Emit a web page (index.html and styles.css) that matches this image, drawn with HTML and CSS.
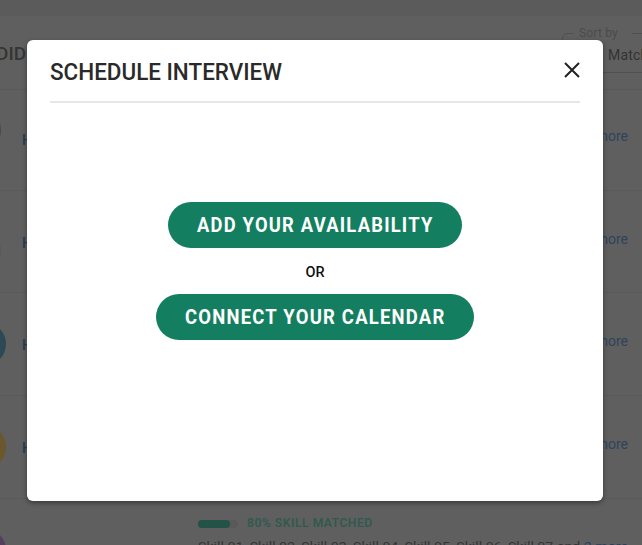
FILE: index.html
```html
<!DOCTYPE html>
<html lang="en">
<head>
<meta charset="utf-8">
<title>Schedule interview</title>
<link rel="stylesheet" href="styles.css">
</head>
<body>
<div class="page">
  <div class="topbar"></div>
  <header class="toolbar">
    <h2 class="section-title">DID</h2>
    <fieldset class="sort"><legend>Sort by</legend>Match</fieldset>
  </header>
  <main class="list">
    <div class="row"><span class="avatar grey"></span><span class="name">Headline</span><a class="more">2 more</a></div>
    <div class="row"><span class="avatar faint"></span><span class="name">Headline</span><a class="more">2 more</a></div>
    <div class="row"><span class="avatar blue"></span><span class="name">Headline</span><a class="more">2 more</a></div>
    <div class="row"><span class="avatar yellow"></span><span class="name">Headline</span><a class="more">2 more</a></div>
    <div class="row last"><span class="avatar purple"></span><span class="name">Headline</span>
      <div class="skills">
        <div class="match"><span class="meter"><span class="meter-fill"></span></span><span class="match-label">80% SKILL MATCHED</span></div>
        <div class="skill-list"><svg class="fit" width="432" height="20"><text x="0" y="15.5" textLength="430" lengthAdjust="spacingAndGlyphs">Skill 01, Skill 02, Skill 03, Skill 04, Skill 05, Skill 06, Skill 07 and <tspan class="link">2 more</tspan></text></svg></div>
      </div>
    </div>
  </main>
</div>
<div class="overlay">
  <section class="dialog" role="dialog">
    <header class="dialog-head">
      <svg class="title" width="240" height="30"><text x="0" y="22" textLength="232" lengthAdjust="spacingAndGlyphs">SCHEDULE INTERVIEW</text></svg>
      <svg class="close" width="16" height="16" viewBox="0 0 16 16"><path d="M1 1 15 15M15 1 1 15"/></svg>
    </header>
    <div class="actions">
      <button class="btn add"><svg width="237" height="24"><text x="0" y="19" textLength="236.5" lengthAdjust="spacingAndGlyphs">ADD YOUR AVAILABILITY</text></svg></button>
      <span class="or">OR</span>
      <button class="btn connect"><svg width="260" height="24"><text x="0" y="19" textLength="260.5" lengthAdjust="spacingAndGlyphs">CONNECT YOUR CALENDAR</text></svg></button>
    </div>
  </section>
</div>
</body>
</html>
```
FILE: styles.css
```css
* { box-sizing: border-box; }
body { margin: 0; width: 642px; height: 545px; overflow: hidden; background: #5f5f5f; font-family: Roboto, sans-serif; }
.page { height: 545px; overflow: hidden; }
.topbar { height: 16px; background: #5b5b5b; }
.toolbar { height: 74px; display: flex; justify-content: space-between; border-bottom: 1px solid #595959; }
.section-title { margin: 27px 0 0 -4px; font-size: 19px; line-height: 22px; font-weight: 500; letter-spacing: 0; color: #353535; }
.sort { width: 96px; height: 48px; margin: 9px -16px 0 0; padding: 5px 0 0 45px; border: 1px solid #505050; border-radius: 6px; font-size: 14px; line-height: 19px; letter-spacing: .2px; color: #333; }
.sort legend { margin-left: -34px; padding: 0 14px 0 5px; font-size: 12px; line-height: 16px; color: #4b4b4b; }
.list { display: flex; flex-direction: column; margin: -2px 0 0 -38px; }
.row { display: grid; flex: none; grid-template-columns: 60px 1fr auto; height: 102.7px; padding: 0 14px 0 0; border-bottom: 1px solid #5a5a5a; align-items: start; }
.avatar { width: 44px; height: 44px; margin-top: 29px; border-radius: 50%; }
.grey { width: 39px; margin-top: 20px; background: #494949; }
.faint { width: 39px; margin-top: 38px; background: #595959; }
.blue { background: #2d4957; }
.yellow { background: #6b572c; }
.purple { background: #53405e; }
.name { margin-top: 42px; font-size: 14px; line-height: 20px; font-weight: 500; color: #253d54; }
.more { margin-top: 38px; font-size: 14px; line-height: 20px; color: #2f435c; }
.last { grid-template-columns: 60px 176px 1fr; border: 0; }
.skills { padding-top: 17px; }
.match { display: flex; align-items: center; gap: 9px; height: 16px; }
.meter { width: 40px; height: 8px; border-radius: 4px; background: #595959; }
.meter-fill { display: block; width: 32px; height: 8px; border-radius: 4px; background: #235346; }
.match-label { margin-top: -1px; font-size: 12px; font-weight: 500; letter-spacing: .6px; white-space: nowrap; color: #2c5a4d; }
.skill-list { height: 20px; margin-top: 3px; }
.fit { display: block; font-size: 13.5px; fill: #353535; overflow: visible; }
.link { fill: #2a405c; }
.overlay { position: absolute; inset: 0; padding: 40px 0 0 27px; }
.dialog { width: 576px; height: 461px; padding: 0 23px; border-radius: 6px; background: #fff; box-shadow: 0 2px 5px rgba(0,0,0,.4); }
.dialog-head { display: flex; justify-content: space-between; height: 63px; padding-top: 18px; border-bottom: 2px solid #e6e6e6; }
.title { font-size: 23px; font-weight: 500; fill: #2a2a2a; }
.close { margin-top: 4px; fill: none; stroke: #222; stroke-width: 2; }
.actions { display: flex; flex-direction: column; align-items: center; padding-top: 99px; }
.btn { display: flex; align-items: center; justify-content: center; height: 46px; padding: 0; border: 0; border-radius: 23px; background: #147f60; font-family: inherit; }
.btn svg { font-size: 19.5px; font-weight: 700; letter-spacing: 1.3px; fill: #fff; overflow: visible; }
.add { width: 294px; }
.connect { width: 318px; }
.or { height: 46px; font-size: 14.5px; line-height: 49px; font-weight: 500; color: #111; }
```
